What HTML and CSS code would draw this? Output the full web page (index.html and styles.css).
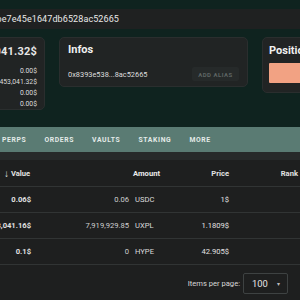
FILE: index.html
```html
<!DOCTYPE html>
<html lang="en">
<head>
    <meta charset="UTF-8">
    <meta name="viewport" content="width=device-width, initial-scale=1.0">
    <title>Explorer</title>
    <link rel="stylesheet" href="styles.css">
</head>
<body>
    <div class="address-bar">
        <div class="address-wrap">
            <span class="address">0x8393e538a4f0c21dbe7e45e1647db6528ac52665</span>
        </div>
    </div>

    <div class="cards">
        <div class="card balance">
            <div class="big">$453,041.32$</div>
            <div class="line">0.00$</div>
            <div class="line">453,041.32$</div>
            <div class="line">0.00$</div>
            <div class="line">0.00$</div>
        </div>
        <div class="card infos">
            <h2>Infos</h2>
            <div class="info-row">
                <span class="short-addr">0x8393e538...8ac52665</span>
                <button class="alias">ADD ALIAS</button>
            </div>
        </div>
        <div class="card positions">
            <h2>Positions</h2>
            <div class="bar"></div>
        </div>
    </div>

    <div class="tabs">
        <span class="tab">PERPS</span>
        <span class="tab">ORDERS</span>
        <span class="tab">VAULTS</span>
        <span class="tab">STAKING</span>
        <span class="tab">MORE</span>
    </div>

    <div class="table">
        <div class="row head">
            <div class="cell value"><span class="arrow">&#8595;</span>Value</div>
            <div class="cell amount">Amount</div>
            <div class="cell price">Price</div>
            <div class="cell rank">Rank</div>
        </div>
        <div class="row">
            <div class="cell value">0.06$</div>
            <div class="cell amount">0.06<span class="token">USDC</span></div>
            <div class="cell price">1$</div>
            <div class="cell rank"></div>
        </div>
        <div class="row">
            <div class="cell value">453,041.16$</div>
            <div class="cell amount">7,919,929.85<span class="token">UXPL</span></div>
            <div class="cell price">1.1809$</div>
            <div class="cell rank"></div>
        </div>
        <div class="row">
            <div class="cell value">0.1$</div>
            <div class="cell amount">0<span class="token">HYPE</span></div>
            <div class="cell price">42.905$</div>
            <div class="cell rank"></div>
        </div>
        <div class="footer">
            <span class="per-page">Items per page:</span>
            <div class="select">
                <span>100</span>
                <span class="caret">&#9662;</span>
            </div>
        </div>
    </div>
</body>
</html>
```

FILE: styles.css
```css
* {
    box-sizing: border-box;
    margin: 0;
    padding: 0;
    font-family: Roboto, 'Liberation Sans', sans-serif;
}

body {
    background-color: #0f231f;
    color: #e6e6e6;
    overflow: hidden;
    width: 300px;
    height: 300px;
    padding-top: 9px;
}

.address-bar {
    height: 20px;
    background-color: #1f2121;
    display: flex;
    align-items: center;
}

.address-wrap {
    width: 119px;
    display: flex;
    justify-content: flex-end;
}

.address {
    font-size: 9px;
    white-space: nowrap;
    color: #e8e8e8;
    letter-spacing: 0.1px;
}

.cards {
    display: flex;
    align-items: flex-start;
    gap: 14px;
    margin-top: 8px;
    margin-left: -60px;
    height: 90px;
}

.card {
    background-color: #212424;
    border: 1px solid #2a2e2e;
    border-radius: 5px;
    flex-shrink: 0;
}

.balance {
    width: 105px;
    height: 73px;
    padding: 7px 7px 0 0;
    text-align: right;
}

.balance .big {
    font-size: 11px;
    font-weight: 700;
    height: 14px;
    line-height: 14px;
    margin-bottom: 7px;
    white-space: nowrap;
    letter-spacing: 0.2px;
}

.balance .line {
    font-size: 6.8px;
    line-height: 11px;
    color: #dcdcdc;
}

.infos {
    width: 189px;
    height: 50px;
    padding: 5px 8px 0;
}

h2 {
    font-size: 11px;
    font-weight: 700;
    color: #f0f0f0;
    line-height: 14px;
}

.info-row {
    display: flex;
    align-items: center;
    justify-content: space-between;
    margin-top: 10px;
}

.short-addr {
    font-size: 7.4px;
    color: #dedede;
}

.alias {
    width: 47px;
    height: 14px;
    border: none;
    border-radius: 2px;
    background-color: #262a2a;
    color: #5d6463;
    font-size: 6px;
    font-weight: 700;
    letter-spacing: 0.5px;
}

.positions {
    width: 120px;
    height: 56px;
    padding: 6px 6px 0;
}

.positions .bar {
    height: 20px;
    margin-top: 5px;
    background-color: #f2a283;
    border-radius: 1px;
}

.tabs {
    display: flex;
    align-items: center;
    height: 25px;
    background-color: #5a7b73;
    padding-left: 2px;
    gap: 18px;
}

.tab {
    font-size: 6.8px;
    font-weight: 700;
    letter-spacing: 0.65px;
    color: #e4ebe9;
}

.table {
    background-color: #1e1f1f;
    border-top: 8px solid #272a2a;
    height: 148px;
}

.row {
    display: grid;
    grid-template-columns: 31px 129px 69px 69px;
    height: 26px;
    align-items: center;
    border-bottom: 1px solid #313434;
    font-size: 7.6px;
}

.row.head {
    height: 27px;
    font-weight: 700;
    color: #ececec;
}

.cell {
    text-align: right;
    white-space: nowrap;
    color: #e2e2e2;
}

.row:not(.head) .value {
    font-weight: 700;
}

.value {
    display: flex;
    justify-content: flex-end;
}

.row.head .value {
    justify-content: flex-start;
    align-items: center;
    padding-left: 4px;
}

.arrow {
    font-size: 10px;
    margin-right: 2px;
    font-weight: 700;
}

.amount {
    color: #cfcfcf;
}

.token {
    display: inline-block;
    width: 25px;
    text-align: left;
    margin-left: 6px;
    color: #dcdcdc;
}

.row.head .amount {
    color: #ececec;
}

.footer {
    display: flex;
    align-items: center;
    justify-content: flex-end;
    height: 36px;
    padding-right: 12px;
    gap: 3px;
}

.per-page {
    font-size: 7.6px;
    color: #d8d8d8;
}

.select {
    width: 45px;
    height: 21px;
    border: 1px solid #3e4242;
    border-radius: 2px;
    display: flex;
    align-items: center;
    padding-left: 8px;
    gap: 9px;
    font-size: 9.4px;
    color: #e6e6e6;
}

.caret {
    font-size: 6px;
    color: #bbbbbb;
}
```
